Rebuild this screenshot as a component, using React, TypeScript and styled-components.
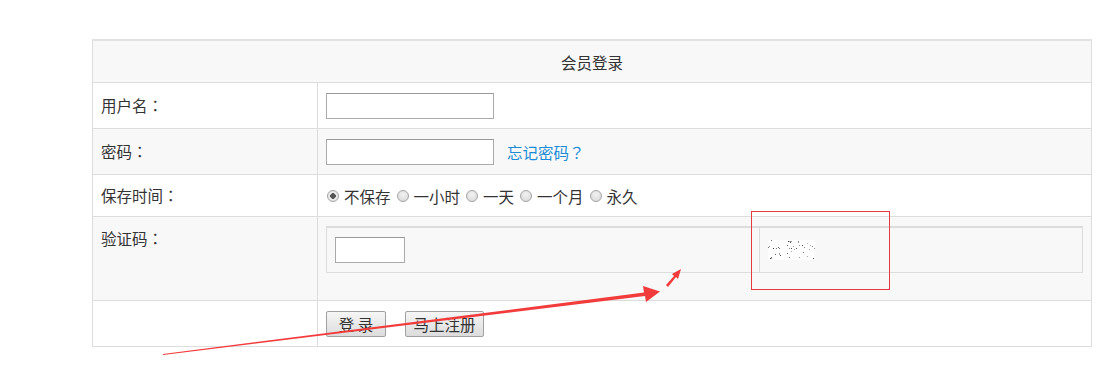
import React, { useState } from 'react';
import styled, { createGlobalStyle } from 'styled-components';

const GlobalStyle = createGlobalStyle`
    html, body {
        margin: 0;
        padding: 0;
        background: #fff;
    }
    body {
        font-family: "Microsoft YaHei", "Noto Sans CJK SC", "Noto Sans", sans-serif;
        font-size: 15.5px;
        color: #333;
    }
`;

const Page = styled.div`
    position: relative;
    width: 1101px;
    height: 375px;
    padding: 39px 0 0 92px;
    box-sizing: border-box;
    overflow: hidden;
`;

const LoginTable = styled.table`
    width: 1000px;
    border-collapse: collapse;
    border-top: 2px solid #e2e2e2;
`;

const Row = styled.tr<{ $shade?: boolean }>`
    background: ${(p) => (p.$shade ? '#f8f8f8' : '#fff')};
`;

const HeadCell = styled.td`
    height: 41px;
    padding: 0;
    text-align: center;
    border: 1px solid #ddd;
    border-top: none;
    line-height: 22px;
`;

const LabelCell = styled.td<{ $h: number; $top?: boolean }>`
    width: 225px;
    height: ${(p) => p.$h}px;
    padding: ${(p) => (p.$top ? '10px 8px 0' : '0 8px 2px')};
    vertical-align: ${(p) => (p.$top ? 'top' : 'middle')};
    border: 1px solid #ddd;
    line-height: 22px;
    box-sizing: border-box;
`;

const FieldCell = styled.td<{ $pad?: string }>`
    padding: ${(p) => p.$pad || '0 8px'};
    vertical-align: middle;
    border: 1px solid #ddd;
    line-height: 22px;
`;

// centred full-width punctuation, as the original font draws it
const Punct = styled.span`
    font-family: "Noto Sans CJK TC", "Noto Sans CJK SC", sans-serif;
`;

const TextInput = styled.input<{ $w: number }>`
    width: ${(p) => p.$w}px;
    height: 26px;
    box-sizing: border-box;
    margin: 0;
    padding: 0 4px;
    border: 1px solid #aaa;
    border-top-color: #999;
    background: #fff;
    font: inherit;
    vertical-align: middle;
    outline: none;
`;

const ForgotLink = styled.a`
    margin-left: 13px;
    color: #1b8bd6;
    text-decoration: none;
    vertical-align: middle;
`;

const RadioGroup = styled.div`
    display: flex;
    align-items: center;
    padding-left: 1px;
`;

const RadioLabel = styled.label`
    display: flex;
    align-items: center;
    gap: 5px;
    margin-right: 6px;
    cursor: pointer;
`;

const Radio = styled.input`
    appearance: none;
    width: 12px;
    height: 12px;
    margin: 0;
    border-radius: 50%;
    border: 1px solid #a5a5a5;
    background: radial-gradient(circle at 50% 35%, #f2f2f2 0%, #d6d6d6 100%);
    box-sizing: border-box;

    &:checked {
        background: radial-gradient(circle, #555 0 2.6px, #efefef 3px, #d9d9d9 100%);
    }
`;

const CaptchaBox = styled.div`
    display: flex;
    height: 47px;
    box-sizing: border-box;
    border: 1px solid #ddd;
    border-top: 2px solid #ddd;
`;

const CaptchaInputPart = styled.div`
    width: 433px;
    box-sizing: border-box;
    flex-shrink: 0;
    display: flex;
    align-items: center;
    padding: 0 8px;
    border-right: 1px solid #ddd;
`;

const CaptchaImagePart = styled.div`
    flex: 1;
    display: flex;
    align-items: center;
    padding: 0 8px;
`;

const Button = styled.button<{ $w: number }>`
    width: ${(p) => p.$w}px;
    height: 26px;
    margin: 0 19px 0 0;
    padding: 0;
    border: 1px solid #a0a0a0;
    border-radius: 2px;
    background: linear-gradient(#f6f6f6, #dcdcdc);
    color: #333;
    font: inherit;
    line-height: 22px;
    vertical-align: middle;
    cursor: pointer;
`;

const Overlay = styled.svg`
    position: absolute;
    left: 0;
    top: 0;
    pointer-events: none;
`;

// speckled captcha picture, fixed seed so it looks the same on every load
const captchaDots = (() => {
    let s = 7;
    const rnd = () => {
        s = (s * 9301 + 49297) % 233280;
        return s / 233280;
    };
    const dots: { x: number; y: number; o: number }[] = [];
    for (let i = 0; i < 42; i++) {
        dots.push({ x: Math.floor(rnd() * 47), y: Math.floor(rnd() * 20), o: 0.35 + rnd() * 0.6 });
    }
    return dots;
})();

const CaptchaImage = () => (
    <svg width="47" height="20" viewBox="0 0 47 20">
        <rect width="47" height="20" fill="#fff" />
        {captchaDots.map((d, i) => (
            <rect key={i} x={d.x} y={d.y} width="1" height="1" fill="#333" opacity={d.o} />
        ))}
    </svg>
);

const periods = ['不保存', '一小时', '一天', '一个月', '永久'];

const App: React.FC = () => {
    const [period, setPeriod] = useState('不保存');

    return (
        <Page>
            <GlobalStyle />
            <LoginTable>
                <tbody>
                    <Row $shade>
                        <HeadCell colSpan={2}>会员登录</HeadCell>
                    </Row>
                    <Row>
                        <LabelCell $h={46}>用户名<Punct>：</Punct></LabelCell>
                        <FieldCell>
                            <TextInput $w={168} type="text" />
                        </FieldCell>
                    </Row>
                    <Row $shade>
                        <LabelCell $h={46}>密码<Punct>：</Punct></LabelCell>
                        <FieldCell>
                            <TextInput $w={168} type="password" />
                            <ForgotLink href="#">忘记密码<Punct>？</Punct></ForgotLink>
                        </FieldCell>
                    </Row>
                    <Row>
                        <LabelCell $h={42}>保存时间<Punct>：</Punct></LabelCell>
                        <FieldCell>
                            <RadioGroup>
                                {periods.map((p) => (
                                    <RadioLabel key={p}>
                                        <Radio
                                            type="radio"
                                            name="cookietime"
                                            checked={period === p}
                                            onChange={() => setPeriod(p)}
                                        />
                                        {p}
                                    </RadioLabel>
                                ))}
                            </RadioGroup>
                        </FieldCell>
                    </Row>
                    <Row $shade>
                        <LabelCell $h={84} $top>验证码<Punct>：</Punct></LabelCell>
                        <FieldCell $pad="0 8px 19px">
                            <CaptchaBox>
                                <CaptchaInputPart>
                                    <TextInput $w={70} type="text" />
                                </CaptchaInputPart>
                                <CaptchaImagePart>
                                    <CaptchaImage />
                                </CaptchaImagePart>
                            </CaptchaBox>
                        </FieldCell>
                    </Row>
                    <Row>
                        <LabelCell $h={46} />
                        <FieldCell>
                            <Button $w={60} type="submit">登 录</Button>
                            <Button $w={79} type="button">马上注册</Button>
                        </FieldCell>
                    </Row>
                </tbody>
            </LoginTable>

            {/* red annotation marks drawn over the screenshot */}
            <Overlay width="1101" height="375" viewBox="0 0 1101 375">
                <rect x="751.5" y="211.5" width="138" height="78" fill="none" stroke="#e23c3c" strokeWidth="1" />
                <polygon points="163,354 644,292.5 643,286 660,291.5 646,302 645,296 163,355" fill="#f23c3c" />
                <polygon points="666,285 674,276 672,274 681,269 678,279 676,277 668,287" fill="#f23c3c" />
            </Overlay>
        </Page>
    );
};

export default App;
